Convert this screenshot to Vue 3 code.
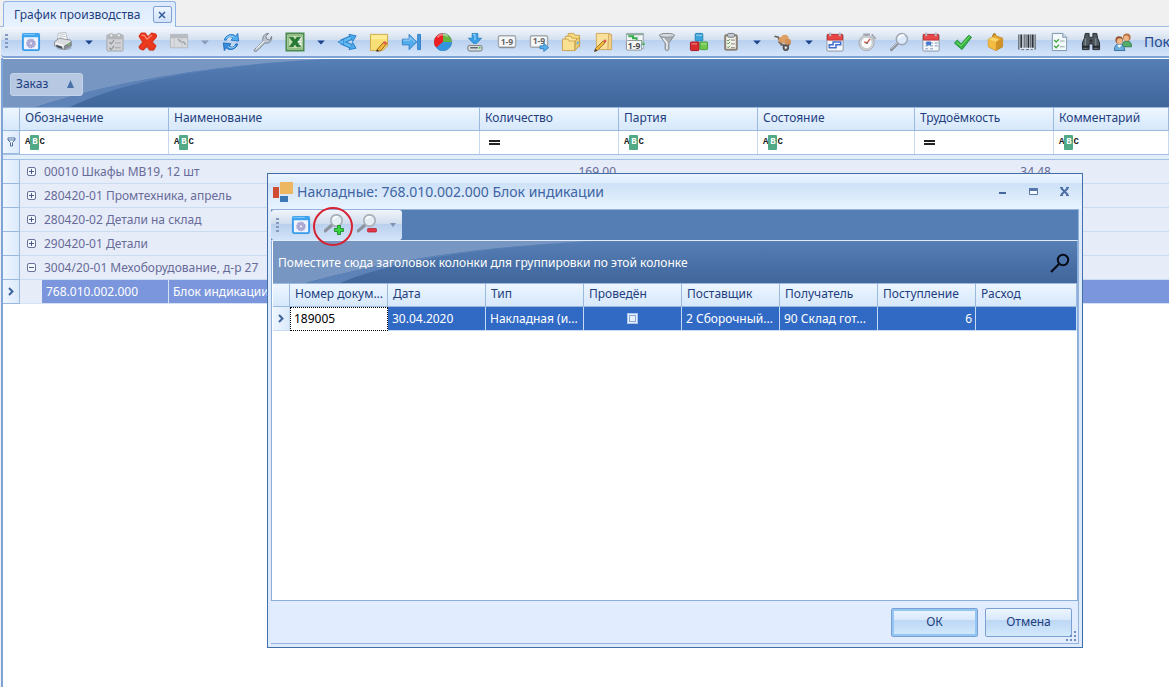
<script setup>
import { ref } from 'vue'

const icons = {
  settings: `<rect x="1.5" y="1.5" width="17" height="17" rx="1.5" fill="#eef4fd" stroke="#369bea" stroke-width="2"/><path d="M1 1h18v4H1z" fill="#3da5f0"/><path d="M2 2h12" stroke="#8dcbf8"/><circle cx="10" cy="11.5" r="4.4" fill="#b3aed6" stroke="#a09bc8" stroke-width="1.2" stroke-dasharray="1.7 1"/><circle cx="10" cy="11.5" r="3.8" fill="#aea9d2"/><circle cx="10" cy="11.5" r="1.2" fill="#eceaf8"/>`,
  print: `<ellipse cx="11" cy="16" rx="8" ry="2.5" fill="#6f7885" opacity=".4"/><path d="M4 8 5 1l8-1 2 9z" fill="#fff" stroke="#98a2ae" stroke-width=".7"/><path d="m6 3 6-1M6 5l7-1" stroke="#b9c2ca"/><path d="m1 10 5-4 12 2 1 6-7 4L1 14z" fill="#d9dcdf" stroke="#767d85" stroke-width=".8"/><path d="m2 11 9 3 7-5" fill="none" stroke="#fff"/><path d="M11 14v4l8-4V9z" fill="#858b92"/><path d="m3 13 6 2v2l-6-2z" fill="#444b54"/><circle cx="16" cy="12" r="1" fill="#78cc50"/>`,
  tasks: `<rect x="1.5" y="2.5" width="17" height="17" rx="1" fill="#d0d1d4" stroke="#a2a6ad"/><path d="M2 3h16v4H2z" fill="#b3b6bc"/><circle cx="6" cy="3" r="2" fill="#e2e3e6" stroke="#aaa"/><circle cx="14" cy="3" r="2" fill="#e2e3e6" stroke="#aaa"/><path d="m4 10 2 2 3-4m-5 8 2 2 3-4" fill="none" stroke="#92969d" stroke-width="1.3"/><path d="M10 11h6m-6 5h6" stroke="#a2a6ad" stroke-width="1.2"/>`,
  cross: `<path d="m2 16 5-6-5-6 2-3 4 1 2 4 4-5 4 1 1 3-5 5 5 5-3 4-4-1-3-4-4 4z" fill="#8d989f" opacity=".45" transform="translate(0 1)"/><path d="m2 15 4-5-4-6 2-3 4 0 3 4 4-4 4 1 1 2-5 6 4 4-2 4-4 0-3-4-4 4-3-1z" fill="#ec3a20" stroke="#dc3620" stroke-width="1.8" stroke-linejoin="round"/><path d="m4 3 3 0 3 4 5-4" fill="none" stroke="#ff8c72" stroke-width="1.4"/>`,
  gantt: `<path d="M1 2h18v14H1z" fill="#d8dadd" stroke="#b6babf"/><path d="M1 2h18v4H1z" fill="#b7babe"/><path d="m9 7 3 3h3l2 3" fill="none" stroke="#a2a9b0" stroke-width="1.8"/><path d="M5 6v9m8-9v9" stroke="#c3c7cd"/>`,
  refresh: `<path d="M3 8C4 3 11 0 15 4l2-3 1 8-8-1 2-2C9 3 6 5 5 8z" fill="#53b0ef" stroke="#2476c5"/><path d="M17 12c-1 5-8 8-12 4l-2 3-1-8 8 1-2 2c3 3 6 1 7-2z" fill="#368edf" stroke="#2167b6"/><path d="M5 6q4-4 8-1M15 14q-4 4-8 1" stroke="#a5d9f8" fill="none"/>`,
  wrench: `<path d="m1 18 9-9c-1-4 1-8 6-8l-3 3 1 3 3 1 2-4c1 5-3 8-7 7l-8 8c-2 2-4 1-3-1z" fill="#bcc5cf" stroke="#7a838e"/><path d="m3 17 8-8" stroke="#eef2f5" stroke-width="1.2"/>`,
  excel: `<path d="M1 1h18v18H1z" fill="#e9f3e5" stroke="#4b8b4c" stroke-width="2"/><path d="M3 3h14v14H3z" fill="#c3dfb2" stroke="#82b470"/><path d="M13 5h4v10h-4z" fill="#fff"/><path d="M13 8h4m-4 3h4m-4 3h4" stroke="#8bba81"/><path d="m4 5 4 0 2 3 2-3h4l-4 5 4 5h-4l-2-3-2 3H4l4-5z" fill="#267b32" stroke="#155f25" stroke-width=".6"/>`,
  branch: `<path d="M4 10 14 5.500M4 10l10 4.500" stroke="#2a80cb" stroke-width="5"/><path d="m12 2 7.500 1.500L16 9.500zM12 18l7.500-1.500L16 10.500z" fill="#4ba8e9" stroke="#2a80cb"/><path d="M4 10 14 5.500M4 10l10 4.500" stroke="#63baf1" stroke-width="3"/><path d="m.5 10 6-3v6z" fill="#63baf1" stroke="#2a80cb" stroke-width=".8"/>`,
  note: `<path d="M1 2h18v12l-5 5H1z" fill="#f7df75" stroke="#cfab4c"/><path d="M2 3h16v4H2z" fill="#ffec97"/><path d="m8 18 7-8 3 2-6 7-4 1z" fill="#f5b638" stroke="#8f6228"/><path d="m14 11 2-2 3 2-2 2z" fill="#dc604c"/><path d="m8 18-1 2 3-1z" fill="#333"/>`,
  arrowend: `<path d="M1 7h7V2l8 8-8 8v-5H1z" fill="#53aceb" stroke="#2f80c8"/><path d="M2 8h7V5l5 5" fill="none" stroke="#a2d6f8"/><path d="M17 2h3v16h-3z" fill="#4598dc" stroke="#2f80c8"/>`,
  pie: `<circle cx="10" cy="10" r="9" fill="#389de3" stroke="#747f88"/><path d="M10 1a9 9 0 0 0-7 15l7-6z" fill="#ef1e22"/><path d="M10 1a9 9 0 0 1 9 9h-9z" fill="#66b53f"/><path d="M3 16a9 9 0 0 0 16-6h-9z" fill="#3495df"/><path d="M4 5q5-5 11-1" stroke="#fff" opacity=".4" fill="none" stroke-width="2"/>`,
  disk: `<path d="M7 1h6v5h4l-7 7-7-7h4z" fill="#3b9fe5" stroke="#237bbd" stroke-width=".8"/><path d="M8 2h2v6" fill="none" stroke="#a2dcf7"/><path d="m5 12-2 2h14l-2-2z" fill="#e0e3e7"/><rect x="2.5" y="13.5" width="15" height="6" rx="2" fill="#d9dcdf" stroke="#6d737b"/><path d="M5 16h8" stroke="#616970" stroke-width="1.5"/><circle cx="15" cy="16" r="1" fill="#42b832"/>`,
  nums: `<rect x="1" y="3.5" width="18" height="12" rx="1.5" fill="#f7f8f9" stroke="#a4a9af" stroke-width="1.5"/><path d="M2 16h16" stroke="#7f858d"/><text x="10" y="13" font-size="9" font-weight="700" text-anchor="middle" fill="#666">1-9</text>`,
  numsnext: `<rect x="1" y="3.5" width="18" height="12" rx="1.5" fill="#f7f8f9" stroke="#a4a9af" stroke-width="1.5"/><text x="10" y="12.5" font-size="9" font-weight="700" text-anchor="middle" fill="#666">1-9</text><path d="M11 14h4v-3l5 5-5 4v-3h-4z" fill="#56afe9" stroke="#2778bb" stroke-width=".8"/>`,
  folders: `<path d="M7 1h6l1 2h5v12H7z" fill="#f9dc80" stroke="#c9a24f"/><path d="M4 4h6l1 2h5v11H4z" fill="#fee79a" stroke="#c9a24f"/><path d="M1 7h6l1 2h6v10H1z" fill="#fae191" stroke="#c9a24f"/><path d="m14 19 5-6V5l-4 3z" fill="#edcb72" stroke="#c9a24f"/><path d="m16 10 2-1v3l-2 1z" fill="#6bb6dc"/>`,
  folderedit: `<path d="M3 1h14v17H3z" fill="#fae09a" stroke="#cfa95f"/><path d="M16 2h3v16h-4z" fill="#f5d386" stroke="#cfa95f"/><path d="m2 17 8-8 2 2-8 8-3 1z" fill="#f6bb36" stroke="#87602a" stroke-width=".8"/><path d="m10 9 2-2 2 2-2 2z" fill="#d65c52"/><path d="m2 17-1 3 3-1z" fill="#333"/>`,
  chartnums: `<path d="M1 1h18v16H1z" fill="#f3f5f7" stroke="#9fadbb"/><path d="M1 1h18v2H1z" fill="#8dac9b"/><path d="M3 4h5v2h4v3h5v3h3" fill="none" stroke="#36ae47" stroke-width="2.2"/><path d="M13 4v8M18 4v8" stroke="#ccd3da"/><rect x="1" y="8.5" width="16" height="10" rx="1" fill="#f8f8f8" stroke="#8b9299"/><text x="9" y="17" font-size="9" font-weight="700" text-anchor="middle" fill="#4b4d52">1-9</text>`,
  funnel: `<path d="M2 3q8-4 16 0l-6 8v7q-2 2-4 0v-7z" fill="#a9aeb5" stroke="#858c94"/><ellipse cx="10" cy="3" rx="8" ry="2" fill="#d6dade" stroke="#8a9097"/><path d="m6 6 4 5v7" fill="none" stroke="#f4f5f6" stroke-width="1.5"/>`,
  cubes: `<rect x="6" y="1" width="8" height="8" rx="1" fill="#3ca5dc" stroke="#2783b7"/><rect x="1" y="10" width="9" height="9" rx="1" fill="#d92a30" stroke="#a81623"/><rect x="11" y="10" width="8" height="8" rx="1" fill="#6fc74c" stroke="#469e35"/><path d="M7 3h6M2 12h6m4 0h6" stroke="#fff" opacity=".5"/>`,
  clipboard: `<rect x="3.5" y="2.5" width="13" height="16" rx="1" fill="#958b7d" stroke="#7c7266"/><path d="M5 4h10v13H5z" fill="#f2f2ea"/><rect x="6.5" y="1" width="7" height="4" rx="1" fill="#c7cbd0" stroke="#737a80"/><path d="m6 8 1 1 2-2m-3 4 1 1 2-2m-3 5 1 1 2-2" stroke="#408a37" fill="none"/><path d="M10 8h4m-4 4h4m-4 4h4" stroke="#777"/>`,
  wheelbarrow: `<path d="m1 4 4 1 3 8 6 1" fill="none" stroke="#675f58" stroke-width="1.7"/><circle cx="9" cy="8" r="3.5" fill="#d99960"/><circle cx="12" cy="6.500" r="4" fill="#dda064"/><circle cx="15" cy="10" r="3.5" fill="#d2915a"/><path d="m5 10 9 5 3-3" fill="none" stroke="#756b62" stroke-width="1.5"/><circle cx="13" cy="16" r="3" fill="#6d6c6b" stroke="#444"/><circle cx="13" cy="16" r="1.2" fill="#f0f0f0"/>`,
  calendarlink: `<rect x="1.5" y="2.5" width="17" height="17" rx="1" fill="#f5f8fc" stroke="#8994a1"/><path d="M2 2h16v6H2z" fill="#ea4545" stroke="#b6343a"/><path d="M5 0v4M15 0v4" stroke="#b8bdc5" stroke-width="2"/><path d="M8 10h8v3h-5v3H4v-3h4z" fill="none" stroke="#416ecb" stroke-width="1.6"/>`,
  clock: `<circle cx="9.500" cy="11" r="8" fill="#d4d7da" stroke="#a4a8ad"/><circle cx="9.500" cy="11" r="6" fill="#fcfcfc" stroke="#bdc1c5"/><path d="m15 2 4 5M6 2h7M10 2v2" stroke="#a2a7ad" stroke-width="2"/><path d="m10 11 3-4m-3 4-3-1" stroke="#db604f" stroke-width="1.5"/><circle cx="10" cy="11" r="1" fill="#666"/>`,
  search: `<path d="m2 18 7-7" stroke="#8c939c" stroke-width="3" stroke-linecap="round"/><path d="m2 17 6-6" stroke="#cdd2d7"/><circle cx="13" cy="7" r="5.8" fill="#dceafb" stroke="#9fa8b4" stroke-width="1.6"/><path d="M9.5 6q2-4 6-3" stroke="#fff" stroke-width="2" fill="none"/>`,
  calendar: `<rect x="1.5" y="2.5" width="17" height="17" rx="1" fill="#f5f8fc" stroke="#8994a1"/><path d="M2 2h16v6H2z" fill="#e94849" stroke="#b6343a"/><path d="M5 0v4M15 0v4" stroke="#b8bdc5" stroke-width="2"/><path d="M4 11h3m2 0h3m2 0h3M4 14h3m2 0h3m2 0h3M4 17h3m2 0h3" stroke="#a4b5d2" stroke-width="1.5"/><rect x="5" y="9.5" width="5" height="4" fill="#4577ce"/>`,
  check: `<path d="m1 11 3-3 4 4 8-9 3 2-10 13z" fill="#35b344" stroke="#1d9033"/><path d="m3 10 5 4 9-10" stroke="#88df74" fill="none"/>`,
  box: `<path d="m3 7 4-2 2-4 3 3 6 2v9l-7 4-8-4z" fill="#e7a82c" stroke="#bd8a2f"/><path d="m3 7 8 3v9l-8-4z" fill="#f2bb42"/><path d="m11 10 7-4v9l-7 4z" fill="#d0932a"/><path d="m7 5 7 2-3 3-8-3z" fill="#f9d66e"/><path d="M8 4q0-3 3-2" fill="none" stroke="#ab7a28" stroke-width="1.5"/>`,
  barcode: `<path d="M1 2h18v15H1z" fill="#e9eef3"/><path d="M1.5 2v16M7 2v14M9 2v14M14 2v14M18.500 2v16" stroke="#29313b"/><path d="M4 2v14M11.500 2v14M16 2v14" stroke="#29313b" stroke-width="2"/><path d="M4 18h3m2 0h3m2 0h2" stroke="#626a74"/>`,
  checklist: `<path d="M3 1h11l4 4v14H3z" fill="#f3f8fc" stroke="#7894ab"/><path d="M14 1v4h4" fill="#cfdeec" stroke="#7894ab"/><path d="m5 8 2 2 3-3m-5 7 2 2 3-3" fill="none" stroke="#43a744" stroke-width="1.5"/><path d="M11 9h5m-5 6h5" stroke="#89a99c"/>`,
  binoculars: `<path d="M4 1h4v4h4V1h4l1 5 2 5v7h-7v-6H8v6H1v-7l2-5z" fill="#505860" stroke="#242a30"/><path d="M4 6v11M15 6v11" stroke="#858f98" stroke-width="1.2"/><path d="M1 15h7m4 0h7" stroke="#22282e" stroke-width="2"/><circle cx="10" cy="9" r="1.8" fill="#333"/>`,
  people: `<path d="M9 15q0-6 5-6t5 6z" fill="#55ad6c" stroke="#357b4d"/><circle cx="14" cy="5" r="4" fill="#b87045"/><circle cx="13.500" cy="6" r="2.7" fill="#eeb586"/><path d="M1 19q0-7 5-7t6 7z" fill="#6daedd" stroke="#316d9f"/><circle cx="6" cy="8" r="4" fill="#96552e"/><circle cx="6.500" cy="9" r="3" fill="#f0b888"/><path d="m4 13 2 3 3-3" fill="#fff"/>`,
  zoomadd: `<path d="m1 17 7-6" stroke="#8c939c" stroke-width="3" stroke-linecap="round"/><circle cx="12.500" cy="6.500" r="5.7" fill="#e4edf4" stroke="#aab1b9" stroke-width="1.7"/><path d="M9 5q2-3 5-2" stroke="#fff" stroke-width="1.7" fill="none"/><path d="M13.500 11.500h3v3h3v3h-3v3h-3v-3h-3v-3h3z" fill="#3bd33f" stroke="#168f27" stroke-width=".9"/>`,
  zoomdel: `<path d="m1 17 7-6" stroke="#8c939c" stroke-width="3" stroke-linecap="round"/><circle cx="12.500" cy="6.500" r="5.7" fill="#e4edf4" stroke="#aab1b9" stroke-width="1.7"/><path d="M9 5q2-3 5-2" stroke="#fff" stroke-width="1.7" fill="none"/><rect x="10.500" y="14.500" width="9" height="3.500" rx="1" fill="#df3544" stroke="#ac2534" stroke-width=".8"/>`,
  more: `<path d="M6 8.500h8l-4 4z" fill="#1d458d"/>`,
  moreoff: `<path d="M6 8.500h8l-4 4z" fill="#8a9bb8"/>`,
}

const tools = [
  ['settings', 'Настройки'], ['print', 'Печать'], ['more', 'Варианты печати'], ['tasks', 'Задания'],
  ['cross', 'Удалить'], ['gantt', 'Диаграмма'], ['moreoff', 'Варианты диаграммы'], ['refresh', 'Обновить'],
  ['wrench', 'Сервис'], ['excel', 'Excel'], ['more', 'Варианты экспорта'], ['branch', 'Разделить'],
  ['note', 'Заметка'], ['arrowend', 'В конец'], ['pie', 'Диаграмма долей'], ['disk', 'Сохранить'],
  ['nums', 'Нумерация'], ['numsnext', 'Следующий номер'], ['folders', 'Папки'], ['folderedit', 'Изменить папку'],
  ['chartnums', 'График'], ['funnel', 'Фильтр'], ['cubes', 'Состав'], ['clipboard', 'Отчёты'],
  ['more', 'Варианты отчётов'], ['wheelbarrow', 'Материалы'], ['more', 'Варианты материалов'],
  ['calendarlink', 'План'], ['clock', 'Время'], ['search', 'Поиск'], ['calendar', 'Календарь'],
  ['check', 'Выполнено'], ['box', 'Накладные'], ['barcode', 'Штрихкод'], ['checklist', 'Список'],
  ['binoculars', 'Найти'], ['people', 'Сотрудники'],
]
const isMore = (n) => n.startsWith('more')

const columns = [
  ['Обозначение', 'abc'], ['Наименование', 'abc'], ['Количество', 'eq'], ['Партия', 'abc'],
  ['Состояние', 'abc'], ['Трудоёмкость', 'eq'], ['Комментарий', 'abc'],
]
const groups = [
  { name: '00010 Шкафы МВ19, 12 шт', qty: '169,00', work: '34,48' },
  { name: '280420-01 Промтехника, апрель' },
  { name: '280420-02 Детали на склад' },
  { name: '290420-01 Детали' },
  { name: '3004/20-01 Мехоборудование, д-р 27', open: true },
]
const docColumns = ['Номер докум...', 'Дата', 'Тип', 'Проведён', 'Поставщик', 'Получатель', 'Поступление', 'Расход']
const posted = ref(false)
</script>

<template>
  <div class="app">
    <header class="tabs">
      <div class="tab">
        <span>График производства</span>
        <button class="tab-close" aria-label="Закрыть вкладку">
          <svg width="8" height="8" viewBox="0 0 8 8"><path d="m1 1 6 6M7 1 1 7" stroke="#33599b" stroke-width="1.5" /></svg>
        </button>
      </div>
    </header>
    <nav class="toolbar">
      <span class="grip"></span>
      <button v-for="([name, label], i) in tools" :key="i" class="tool" :class="{ more: isMore(name) }" :aria-label="label">
        <svg width="20" height="20" viewBox="-0.5 -0.5 21 21" v-html="icons[name]"></svg>
      </button>
      <button class="tool-text">Пок</button>
    </nav>

    <main class="grid">
      <div class="group-panel">
        <svg class="swoosh" width="340" height="48" viewBox="0 0 340 48">
          <path d="M0 0H322C180 8 95 28 33 48H0z" fill="#7796c2" />
          <path d="M33 48C95 28 180 8 322 0C200 8 120 22 67 48z" fill="#5c82b7" />
        </svg>
        <button class="chip">Заказ <svg width="9" height="8" viewBox="0 0 9 8"><path d="M4.500 0 8 8H1z" fill="#4a71a8" /></svg></button>
      </div>
      <table class="main-table">
        <colgroup><col class="w-mark" /><col class="w-code" /><col class="w-name" /><col class="w-std" /><col class="w-std" /><col class="w-state" /><col class="w-std" /><col /></colgroup>
        <thead>
          <tr class="heads">
            <th></th>
            <th v-for="c in columns" :key="c[0]">{{ c[0] }}</th>
          </tr>
          <tr class="filters">
            <td class="mark">
              <svg width="9" height="10" viewBox="0 0 9 10"><path d="M1 1h7v2L5.500 5.500V9h-2V5.500L1 3zM1 3h7" fill="#fff" stroke="#4c70a5" /></svg>
            </td>
            <td v-for="c in columns" :key="c[0]">
              <span v-if="c[1] === 'abc'" class="abc"><b>A</b><b class="mid">B</b><b>C</b></span>
              <span v-else class="eq"></span>
            </td>
          </tr>
          <tr class="gap"><td colspan="8"></td></tr>
        </thead>
        <tbody>
          <tr v-for="g in groups" :key="g.name" class="group">
            <td class="mark"></td>
            <td colspan="2">
              <div class="group-name">
                <button class="expander" :aria-label="g.open ? 'Свернуть' : 'Развернуть'">
                  <svg width="9" height="9" viewBox="0 0 9 9">
                    <rect x=".5" y=".5" width="8" height="8" rx="1.500" fill="#f3f6fd" stroke="#67749b" />
                    <path :d="g.open ? 'M2 4.500h5' : 'M2 4.500h5M4.500 2v5'" stroke="#4b5a88" />
                  </svg>
                </button>
                {{ g.name }}
              </div>
            </td>
            <td class="num">{{ g.qty }}</td>
            <td></td>
            <td></td>
            <td class="num">{{ g.work }}</td>
            <td></td>
          </tr>
          <tr class="current">
            <td class="mark"><svg width="6" height="9" viewBox="0 0 6 9"><path d="m1 1 3.500 3.500L1 8" fill="none" stroke="#3d639d" stroke-width="2" /></svg></td>
            <td class="indent"><div>768.010.002.000</div></td>
            <td>Блок индикации</td>
            <td></td><td></td><td></td><td></td><td></td>
          </tr>
        </tbody>
      </table>
    </main>

    <section class="dialog" role="dialog" aria-labelledby="dlg-title">
      <div class="title">
        <svg width="20" height="20" viewBox="0 0 20 20">
          <path d="M0 5h6v11H0z" fill="#cf4b31" /><path d="M7 0h13v12H7z" fill="#edb660" /><path d="M7 14h8v6H7z" fill="#3c78b5" />
        </svg>
        <h1 id="dlg-title">Накладные: 768.010.002.000 Блок индикации</h1>
        <button aria-label="Свернуть окно"><svg width="9" height="9" viewBox="0 0 9 9"><path d="M1 5h7v2H1z" fill="#45689e" /></svg></button>
        <button aria-label="Развернуть окно"><svg width="9" height="9" viewBox="0 0 9 9"><path d="M.5 1.500h8v6h-8z" fill="#f5f9ff" stroke="#5877a9" /><path d="M0 1h9v3H0z" fill="#5877a9" /></svg></button>
        <button aria-label="Закрыть окно"><svg width="9" height="9" viewBox="0 0 9 9"><path d="m1 1 7 7M8 1 1 8" stroke="#4c6fa4" stroke-width="2" /><path d="M0 .500h3m3 0h3m-9 8h3m3 0h3" stroke="#4c6fa4" /></svg></button>
      </div>
      <div class="client">
        <div class="strip">
          <div class="strip-tools">
            <span class="grip"></span>
            <button aria-label="Настройки окна"><svg width="20" height="20" viewBox="-0.5 -0.5 21 21" v-html="icons.settings"></svg></button>
            <button class="ringed" aria-label="Добавить накладную"><svg width="20" height="22" viewBox="0 0 20 22" v-html="icons.zoomadd"></svg></button>
            <button aria-label="Убрать накладную"><svg width="20" height="22" viewBox="0 0 20 22" v-html="icons.zoomdel"></svg></button>
            <button class="strip-more" aria-label="Ещё"><svg width="6" height="4" viewBox="0 0 6 4"><path d="M0 0h6L3 4z" fill="#8193b5" /></svg></button>
          </div>
        </div>
        <div class="docs">
          <div class="group-panel hint">
            <svg class="swoosh" width="340" height="42" viewBox="0 0 340 42">
              <path d="M0 0H322C180 7 95 25 33 42H0z" fill="#7796c2" />
              <path d="M33 42C95 25 180 7 322 0C200 7 120 20 67 42z" fill="#5c82b7" />
            </svg>
            <span>Поместите сюда заголовок колонки для группировки по этой колонке</span>
            <button class="find" aria-label="Поиск">
              <svg width="20" height="20" viewBox="0 0 20 20"><circle cx="13" cy="7" r="5.200" fill="none" stroke="#060b16" stroke-width="2" /><path d="m9 11-8 8" stroke="#060b16" stroke-width="2.200" /></svg>
            </button>
          </div>
          <table class="doc-table">
            <colgroup><col class="w-mark" /><col v-for="n in 7" :key="n" class="w-doc" /><col /></colgroup>
            <thead>
              <tr class="heads"><th></th><th v-for="c in docColumns" :key="c">{{ c }}</th></tr>
            </thead>
            <tbody>
              <tr class="doc">
                <td class="mark"><svg width="6" height="9" viewBox="0 0 6 9"><path d="m1 1 3.500 3.500L1 8" fill="none" stroke="#3d639d" stroke-width="2" /></svg></td>
                <td class="edit">189005</td>
                <td>30.04.2020</td>
                <td>Накладная (и...</td>
                <td class="tick"><input v-model="posted" type="checkbox" aria-label="Проведён" /></td>
                <td>2 Сборочный...</td>
                <td>90 Склад гот...</td>
                <td class="num">6</td>
                <td></td>
              </tr>
            </tbody>
          </table>
        </div>
        <footer class="actions">
          <button class="action primary">ОК</button>
          <button class="action">Отмена</button>
          <svg class="resize" width="11" height="11" viewBox="0 0 11 11"><path d="M8 0h2v2H8zM4 4h2v2H4zM8 4h2v2H8zM0 8h2v2H0zM4 8h2v2H4zM8 8h2v2H8z" fill="#6f90c3" /></svg>
        </footer>
      </div>
    </section>
  </div>
</template>

<style>
html, body { height: 100%; overflow: hidden; }
#app { height: 100%; }
</style>

<style scoped>
.app {
  position: relative;
  height: 100%;
  display: flex;
  flex-direction: column;
  overflow: hidden;
  background: #f0f0f0;
  color: #1e3e7f;
  font: 12px/16px "Noto Sans", "DejaVu Sans Condensed", sans-serif;
}
* { box-sizing: border-box; }
button { padding: 0; border: 0; background: none; color: inherit; font: inherit; }
svg { display: block; flex: none; }

.tabs { height: 27px; display: flex; align-items: flex-end; padding-left: 3px; border-bottom: 1px solid #9ebbe3; flex: none; }
.tab {
  display: flex; align-items: center; gap: 12px; height: 26px; margin-bottom: -1px; padding: 0 3px 0 10px;
  border: 1px solid #8fb3e2; border-bottom: 0; border-radius: 3px 3px 0 0;
  background: linear-gradient(#dceafc, #e9f3ff); white-space: nowrap;
}
.tab-close { display: grid; place-items: center; width: 19px; height: 17px; border: 1px solid #7f9fcf; border-radius: 2px; background: linear-gradient(#eef5ff, #d0e2fa); }

.toolbar {
  display: flex; align-items: center; flex: none; height: 31px; margin-left: 1px; padding-left: 4px; overflow: hidden;
  border-bottom: 2px solid #7ea3d4; border-radius: 4px 0 0 4px;
  background: linear-gradient(#f4f8fd 0, #d3dfee 45%, #b9d0ef 46%, #d5e6fb 100%);
}
.grip { flex: none; width: 3px; height: 15px; background: repeating-linear-gradient(#8399bd 0 2px, transparent 2px 4px); }
.toolbar .grip { margin-right: 7px; }
.tool { display: grid; place-items: center; flex: none; width: 32px; height: 28px; }
.tool.more { width: 20px; }
.tool-text { margin-left: 5px; color: #254a8c; font-size: 14px; }

.grid { flex: 1; margin-left: 1px; border-left: 2px solid #7fa5d8; background: #fff; padding-top: 1px; }
.group-panel { position: relative; height: 48px; display: flex; align-items: center; padding: 2px 7px 0; background: linear-gradient(#567fb6, #40669b); }
.swoosh { position: absolute; left: 0; top: 0; }
.chip {
  position: relative; display: flex; align-items: center; justify-content: space-between;
  width: 73px; height: 23px; padding: 0 7px 0 5px; border-radius: 3px; border: 1px solid #c5d3e8; background: #b6c8e2;
}

table { width: 100%; border-collapse: separate; border-spacing: 0; table-layout: fixed; }
th, td { padding: 0; font-weight: 400; text-align: left; white-space: nowrap; overflow: hidden; }
.w-mark { width: 17px; }
.w-code { width: 149px; }
.w-name { width: 311px; }
.w-std { width: 139px; }
.w-state { width: 157px; }
.w-doc { width: 98px; }

.heads th { height: 24px; padding: 0 0 2px 5px; border: 1px solid #9bb8de; border-width: 1px 1px 1px 0; background: linear-gradient(#edf6ff, #d6e8fb); }
.filters td { height: 23px; padding-left: 5px; border-right: 1px solid #c8d9ef; background: #fff; }
.filters .mark, .mark { padding: 0; border-right: 1px solid #9bb8de; border-bottom: 1px solid #9bb8de; background: linear-gradient(90deg, #eef6ff, #dbeafb); }
.mark svg { margin: 0 auto; }
.gap td { height: 6px; border: 1px solid #a3bfe2; border-width: 1px 0; background: #e2eefc; }
.abc { display: flex; align-items: center; width: 19px; color: #222; font: 700 9px/15px "Liberation Mono", monospace; }
.abc b { flex: 1; text-align: center; }
.abc .mid { flex: none; width: 9px; border-radius: 1px; color: #fff; background: #52a985; }
.eq { display: block; width: 11px; height: 5px; margin-left: 4px; border: solid #222; border-width: 2px 0; }

.group td { height: 24px; border-bottom: 1px solid #cbdcf0; background: #e6ecf8; color: #686b99; }
.group .mark, .current .mark { border-color: #9bb8de; background: linear-gradient(90deg, #eef6ff, #dbeafb); }
.group-name { display: flex; align-items: center; gap: 8px; padding-left: 7px; }
.group .num, .doc .num { text-align: right; padding-right: 3px; }
.current td { height: 24px; padding-left: 4px; border-bottom: 1px solid #d5e2f4; background: #7b96dd; color: #fff; }
.current .mark { padding: 0; }
.current .indent { padding: 0 0 0 22px; border-right: 1px solid #d5e2f4; background: #e6ecf8; }
.indent div { padding-left: 4px; line-height: 23px; background: #7b96dd; }

.dialog {
  position: absolute; left: 267px; top: 173px; width: 816px; height: 475px;
  display: flex; flex-direction: column; padding: 0 3px 3px;
  border: 1px solid #436fa8; background: #dceafc;
}
.title { display: flex; align-items: center; flex: none; height: 35px; margin: 0 -3px; padding: 0 2px 0 5px; background: linear-gradient(#eaf4ff 0, #dfedfc 25%, #cee1f7 27%, #e8f3ff 100%); }
.title h1 { flex: 1; margin: 0 0 0 4px; color: #4065a2; font-size: 14px; line-height: 20px; font-weight: 400; white-space: nowrap; }
.title button { display: grid; place-items: center; width: 31px; height: 20px; }
.client { flex: 1; display: flex; flex-direction: column; border: 1px solid #94b4de; border-left: 0; }
.strip { position: relative; z-index: 1; flex: none; height: 30px; background: #557eb4; }
.strip-tools { display: flex; align-items: center; width: 131px; height: 30px; padding-left: 5px; border-radius: 3px; background: linear-gradient(#f0f5fc 0, #d1dded 45%, #b8cfed 46%, #d3e4f9 100%); }
.strip-tools .grip { margin-right: 5px; }
.strip-tools button { display: grid; place-items: center; width: 33px; height: 28px; }
.strip-tools .strip-more { width: 19px; }
.ringed { position: relative; }
.ringed::after { content: ""; box-sizing: border-box; position: absolute; left: -4px; top: -4px; width: 40px; height: 39px; border: 2px solid #d62231; border-radius: 50%; }
.docs { flex: 1; border: 1px solid #8badd9; border-top-color: #dfebfa; padding-left: 1px; background: #fff; }
.hint { height: 42px; padding: 2px 7px 0 5px; justify-content: space-between; color: #fff; }
.hint span, .find { position: relative; }
.doc td { height: 24px; padding-left: 4px; border-right: 1px solid #c5daf3; border-bottom: 1px solid #c5daf3; background: #316ac5; color: #fff; }
.doc .mark { padding: 0; background: linear-gradient(90deg, #eef6ff, #dbeafb); }
.doc .edit { padding-left: 3px; border: 1px dotted #000; background: #fff; color: #000; }
.doc .tick { padding: 0; }
.doc .tick input { appearance: none; display: block; width: 11px; height: 11px; margin: 0 auto; border: 1px solid #a9c7ee; outline: 1px solid #8aa9d6; outline-offset: -3px; background: #e7f0fc; }
.actions { position: relative; flex: none; display: flex; align-items: center; justify-content: flex-end; gap: 7px; height: 42px; padding-right: 6px; background: #e1edfe; }
.action { width: 87px; height: 29px; border: 1px solid #7aa0d4; border-radius: 2px; background: linear-gradient(#ecf5ff 0, #d9e9fb 40%, #bdd7f5 42%, #d3eafc 100%); }
.primary { box-shadow: inset 0 0 0 2px #94c6f4; }
.resize { position: absolute; right: 1px; bottom: 1px; }
</style>
